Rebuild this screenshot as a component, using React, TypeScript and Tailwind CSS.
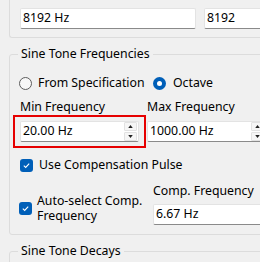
import React from "react";

const font = { fontFamily: '"Noto Sans", "Segoe UI", sans-serif' };

function Radio({ checked }: { checked?: boolean }) {
  return checked ? (
    <span className="flex h-[13px] w-[13px] shrink-0 items-center justify-center rounded-full bg-[#005fb8]">
      <span className="h-[5px] w-[5px] rounded-full bg-white" />
    </span>
  ) : (
    <span className="h-[13px] w-[13px] shrink-0 rounded-full border border-[#5d5d5d] bg-[#f7f7f7]" />
  );
}

function Check() {
  return (
    <span className="flex h-[13px] w-[13px] shrink-0 items-center justify-center rounded-[3px] bg-[#005fb8]">
      <svg viewBox="0 0 10 10" className="h-[9px] w-[9px]">
        <path d="M2 5.2 L4.1 7.2 L8 2.8" fill="none" stroke="white" strokeWidth="1.2" />
      </svg>
    </span>
  );
}

function Field({ value, className }: { value: string; className: string }) {
  return (
    <div
      className={`flex h-[21px] items-center rounded-[2px] border border-[#e3e3e3] border-b-[#8a8a8a] bg-white pl-[2px] ${className}`}
    >
      {value}
    </div>
  );
}

function Spin({ value, className }: { value: string; className: string }) {
  return (
    <div
      className={`flex h-[21px] items-center rounded-[2px] border border-[#e3e3e3] border-b-[#8a8a8a] bg-white pl-[2px] ${className}`}
    >
      <span className="flex-1">{value}</span>
      <div className="mr-[1px] flex flex-col gap-[1px]">
        <span className="flex h-[9px] w-[13px] items-center justify-center rounded-[1px] border border-[#e2e2e2] bg-[#f6f6f6]">
          <svg viewBox="0 0 6 4" className="h-[3px] w-[5px]">
            <path d="M0 4 L3 0 L6 4 Z" fill="#222" />
          </svg>
        </span>
        <span className="flex h-[9px] w-[13px] items-center justify-center rounded-[1px] border border-[#e2e2e2] bg-[#f6f6f6]">
          <svg viewBox="0 0 6 4" className="h-[3px] w-[5px]">
            <path d="M0 0 L3 4 L6 0 Z" fill="#222" />
          </svg>
        </span>
      </div>
    </div>
  );
}

export default function App() {
  return (
    <div
      className="relative h-[262px] w-[260px] overflow-hidden bg-[#f0f0f0] text-[12.3px] leading-none text-black"
      style={font}
    >
      {/* upper group (cut off) */}
      <div className="ml-[9px] flex h-[38px] w-[320px] gap-[8px] rounded-bl-[3px] border-b border-l border-[#dcdcdc] pl-[10px] pt-[8px]">
        <Field value="8192 Hz" className="w-[176px]" />
        <Field value="8192" className="w-[100px]" />
      </div>

      {/* Sine Tone Frequencies */}
      <div className="relative ml-[9px] mt-[16px] h-[181px] w-[320px] rounded-[3px] border border-[#dcdcdc] pl-[10px]">
        <span className="absolute -top-[8px] left-[8px] bg-[#f0f0f0] px-[3px] leading-[14px]">
          Sine Tone Frequencies
        </span>

        <div className="ml-[-1px] mt-[21px] flex h-[14px] items-center">
          <div className="flex w-[134px] items-center gap-[6px]">
            <Radio />
            <span>From Specification</span>
          </div>
          <div className="flex items-center gap-[7px]">
            <Radio checked />
            <span>Octave</span>
          </div>
        </div>

        <div className="mt-[9px] flex h-[16px] items-center">
          <span className="w-[127px]">Min Frequency</span>
          <span>Max Frequency</span>
        </div>

        <div className="mt-[6px] flex">
          <Spin value="20.00 Hz" className="w-[119px]" />
          <Spin value="1000.00 Hz" className="ml-[8px] w-[119px]" />
        </div>

        <div className="mt-[17px] flex h-[13px] items-center gap-[6px]">
          <Check />
          <span>Use Compensation Pulse</span>
        </div>

        <div className="mt-[12px] flex">
          <div className="ml-[-1px] flex w-[134px] items-center gap-[5px] pt-[7px]">
            <Check />
            <span className="leading-[15px]">
              Auto-select Comp.
              <br />
              Frequency
            </span>
          </div>
          <div className="flex flex-col">
            <span className="leading-[14px]">Comp. Frequency</span>
            <Field value="6.67 Hz" className="mt-[6px] w-[120px]" />
          </div>
        </div>
      </div>

      {/* Sine Tone Decays */}
      <div className="relative ml-[9px] mt-[16px] h-[40px] w-[320px] rounded-t-[3px] border border-[#dcdcdc]">
        <span className="absolute -top-[8px] left-[8px] bg-[#f0f0f0] px-[3px] leading-[14px]">
          Sine Tone Decays
        </span>
      </div>

      {/* highlight */}
      <div className="absolute left-[13px] top-[115px] h-[33px] w-[133px] border-2 border-[#e60000]" />
    </div>
  );
}
